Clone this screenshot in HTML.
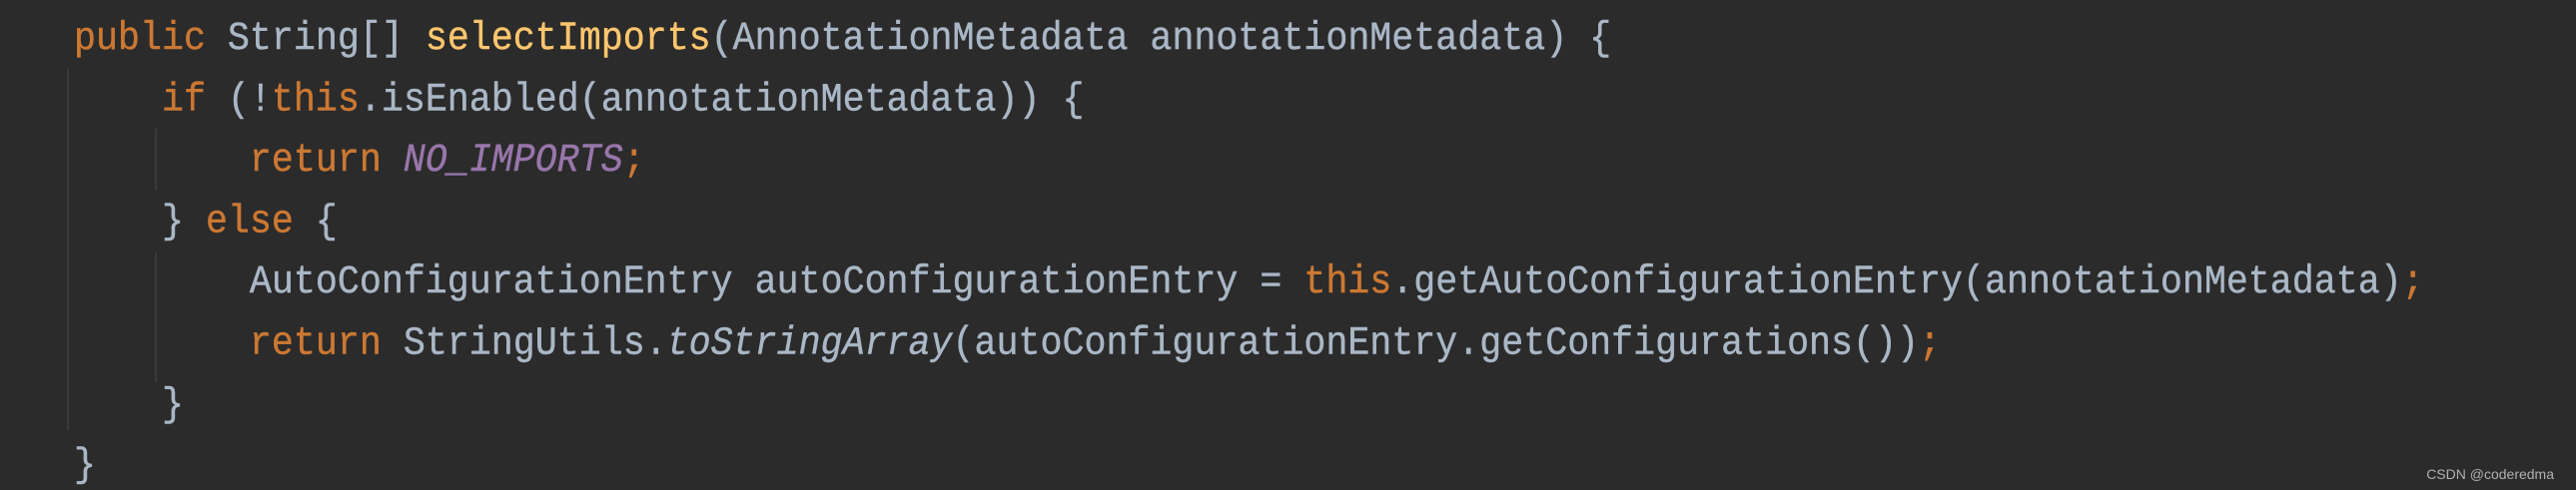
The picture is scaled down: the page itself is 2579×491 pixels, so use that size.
<!DOCTYPE html>
<html><head><meta charset="utf-8"><style>
html,body{margin:0;padding:0;background:#2b2b2b;width:2579px;height:491px;overflow:hidden;position:relative}
pre{margin:0;position:absolute;left:74px;font-family:"Liberation Mono","DejaVu Sans Mono",monospace;font-size:36.65px;color:#a9b7c6;white-space:pre;transform:scaleY(1.08);transform-origin:0 0;-webkit-text-stroke:0.4px currentColor}
.k{color:#cc7832}.m{color:#ffc66d}.c{color:#9876aa;font-style:italic}.i{font-style:italic}
.g{position:absolute;width:2px;background:#3a3a3a}
.w{position:absolute;right:22px;bottom:8px;font-family:"Liberation Sans",sans-serif;font-size:14px;color:#b0b0b0}
</style></head><body>
<div class="g" style="left:67px;top:69px;height:362px"></div>
<div class="g" style="left:155px;top:129px;height:62px"></div>
<div class="g" style="left:155px;top:253px;height:130px"></div>
<pre style="top:9px;line-height:56.6px"><span class="k">public</span> String[] <span class="m">selectImports</span>(AnnotationMetadata annotationMetadata) {
    <span class="k">if</span> (!<span class="k">this</span>.isEnabled(annotationMetadata)) {
        <span class="k">return</span> <span class="c">NO_IMPORTS</span><span class="k">;</span>
    } <span class="k">else</span> {
        AutoConfigurationEntry autoConfigurationEntry = <span class="k">this</span>.getAutoConfigurationEntry(annotationMetadata)<span class="k">;</span>
        <span class="k">return</span> StringUtils.<span class="i">toStringArray</span>(autoConfigurationEntry.getConfigurations())<span class="k">;</span>
    }
}</pre>
<div class="w">CSDN @coderedma</div>
</body></html>
